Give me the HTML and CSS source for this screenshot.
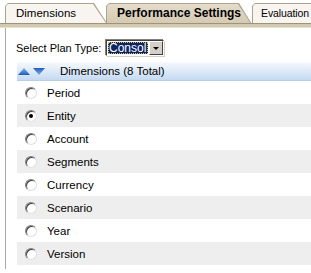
FILE: index.html
```html
<!DOCTYPE html>
<html>
<head>
<meta charset="utf-8">
<link rel="stylesheet" href="styles.css">
</head>
<body>
<div class="tabs">
  <div class="tab tab-dim"><span class="tab-face">Dimensions</span></div>
  <div class="tab tab-active"><span class="tab-face">Performance Settings</span></div>
  <div class="tab tab-eval"><span class="tab-face">Evaluation</span></div>
</div>
<div class="strip"></div>
<div class="content">
  <div class="plan-row">
    <span class="plan-label">Select Plan Type:</span>
    <span class="select">
      <span class="select-value"><span class="select-text">Consol</span></span>
      <span class="select-btn"><span class="select-arrow"></span></span>
    </span>
  </div>
  <div class="list">
    <div class="list-head">
      <svg class="arr" width="12" height="7" viewBox="0 0 12 7"><defs><linearGradient id="gu" x1="0" y1="0" x2="0" y2="1"><stop offset="0" stop-color="#7fb0ea"/><stop offset="1" stop-color="#1f5fb8"/></linearGradient></defs><polygon points="6,0 12,7 0,7" fill="url(#gu)"/></svg>
      <svg class="arr" width="12" height="7" viewBox="0 0 12 7"><defs><linearGradient id="gd" x1="0" y1="0" x2="0" y2="1"><stop offset="0" stop-color="#1f5fb8"/><stop offset="1" stop-color="#7fb0ea"/></linearGradient></defs><polygon points="0,0 12,0 6,7" fill="url(#gd)"/></svg>
      <span class="head-text">Dimensions (8 Total)</span>
    </div>
    <div class="row"><span class="radio"></span><span>Period</span></div>
    <div class="row alt"><span class="radio checked"></span><span>Entity</span></div>
    <div class="row"><span class="radio"></span><span>Account</span></div>
    <div class="row alt"><span class="radio"></span><span>Segments</span></div>
    <div class="row"><span class="radio"></span><span>Currency</span></div>
    <div class="row alt"><span class="radio"></span><span>Scenario</span></div>
    <div class="row"><span class="radio"></span><span>Year</span></div>
    <div class="row alt"><span class="radio"></span><span>Version</span></div>
  </div>
</div>
</body>
</html>
```
FILE: styles.css
```css
html, body {
  margin: 0;
  padding: 0;
  background: #fff;
  overflow: hidden;
}
body {
  font-family: "Liberation Sans", Arial, sans-serif;
  font-size: 11px;
  color: #000;
  width: 311px;
  height: 273px;
}
.tabs {
  display: flex;
  padding: 3px 0 0 5px;
  height: 20px;
  overflow: hidden;
}
.tab {
  position: relative;
  flex: none;
  box-sizing: border-box;
  height: 20px;
  padding: 1px 1px 0 1px;
  background: #aea38c;
  clip-path: polygon(0 3px, 3px 0, calc(100% - 13px) 0, 100% 100%, 0 100%);
  white-space: nowrap;
  font-size: 11.5px;
}
.tab-face {
  display: block;
  height: 19px;
  line-height: 19px;
  padding-left: 10px;
  background: #f8f5f0;
  clip-path: polygon(0 2px, 2px 0, calc(100% - 13px) 0, 100% 100%, 0 100%);
}
.tab-dim {
  width: 102px;
  z-index: 1;
}
.tab-active {
  width: 146px;
  margin-left: -1px;
  font-weight: bold;
  font-size: 12px;
  z-index: 3;
  height: 21px;
  margin-bottom: -1px;
}
.tab-active .tab-face {
  height: 20px;
  background: linear-gradient(#e4dccb, #d4c9b1);
}
.tab-eval {
  width: 62px;
  z-index: 1;
  font-size: 10.5px;
  clip-path: polygon(0 3px, 3px 0, 100% 0, 100% 100%, 0 100%);
}
.tab-eval .tab-face {
  padding-left: 8px;
  letter-spacing: -0.1px;
  clip-path: polygon(0 2px, 2px 0, 100% 0, 100% 100%, 0 100%);
}
.strip {
  height: 3px;
  background: #d4c9b1;
  border-top: 1px solid #9e937c;
  border-bottom: 1px solid #e6e0d3;
  position: relative;
  z-index: 2;
}
.content {
  margin-left: 5px;
  border-left: 1px solid #a9a9a9;
  height: 241px;
  padding-left: 10px;
}
.plan-row {
  display: flex;
  align-items: center;
  padding-top: 12px;
  height: 16px;
}
.plan-label {
  width: 90px;
  white-space: nowrap;
  font-size: 11px;
}
.select {
  display: flex;
  box-sizing: border-box;
  width: 58px;
  height: 16px;
  border: 1px solid;
  border-color: #404040 #fff #fff #404040;
  box-shadow: -1px -1px 0 #808080, 1px 1px 0 #d4d0c8;
  background: #fff;
}
.select-value {
  flex: 1;
  padding: 1px;
  display: flex;
}
.select-text {
  flex: 1;
  background: #0a246a;
  color: #fff;
  outline: 1px dotted #e8c040;
  outline-offset: -1px;
  line-height: 12px;
  font-size: 12px;
  padding-left: 1px;
}
.select-btn {
  width: 14px;
  box-sizing: border-box;
  background: #d4d0c8;
  border: 1px solid;
  border-color: #fff #404040 #404040 #fff;
  display: flex;
  align-items: center;
  justify-content: center;
}
.select-arrow {
  width: 0;
  height: 0;
  border-left: 3px solid transparent;
  border-right: 3px solid transparent;
  border-top: 3px solid #000;
}
.list {
  margin-top: 6px;
  margin-left: 1px;
}
.list-head {
  display: flex;
  align-items: center;
  height: 18px;
  border-bottom: 1px solid #b9cfe8;
  background: linear-gradient(#f6f9fd, #c5daf1);
  padding-left: 1px;
}
.arr {
  margin-right: 3px;
}
.head-text {
  margin-left: 12px;
  font-size: 11.5px;
}
.row {
  display: flex;
  align-items: center;
  height: 23px;
  font-size: 11.5px;
}
.row.alt {
  background: #eeeeee;
}
.radio {
  box-sizing: border-box;
  width: 12px;
  height: 12px;
  border-radius: 50%;
  margin-left: 8px;
  margin-right: 10px;
  background: #fff;
  border: 1px solid;
  border-color: #808080 #e0e0e0 #e0e0e0 #808080;
  box-shadow: inset 1px 1px 0 #404040;
  position: relative;
}
.radio.checked::after {
  content: "";
  position: absolute;
  left: 3px;
  top: 3px;
  width: 4px;
  height: 4px;
  border-radius: 50%;
  background: #000;
}
```
